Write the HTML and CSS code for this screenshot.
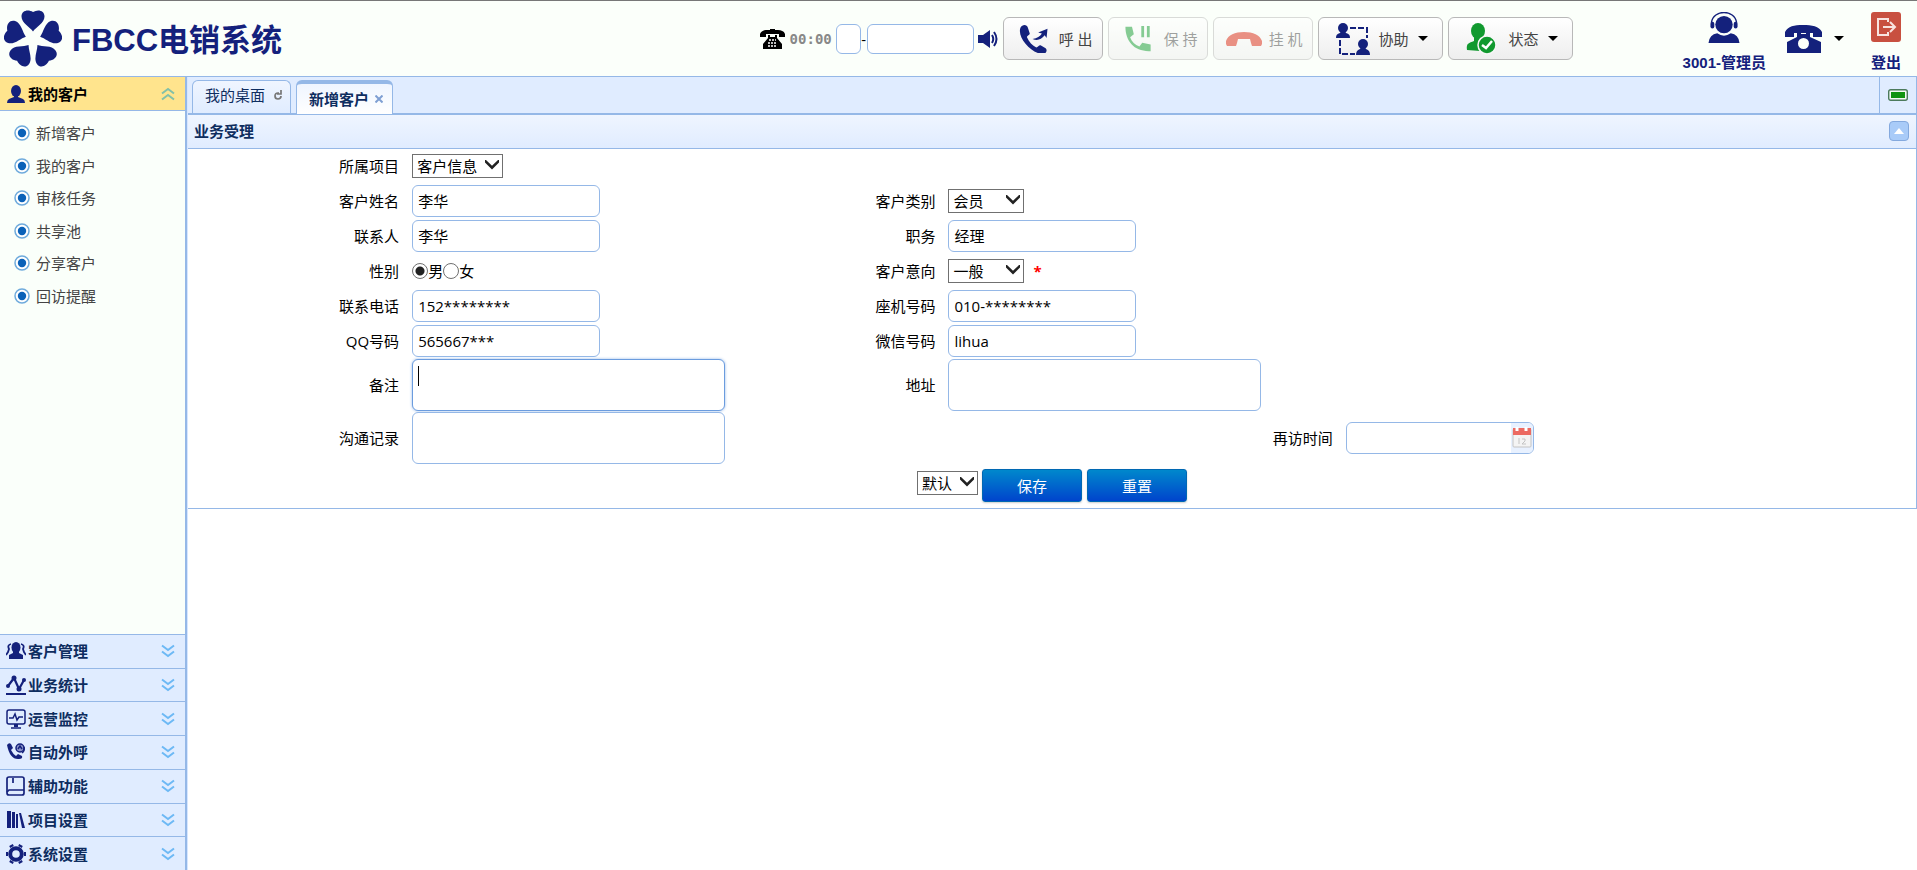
FILE: index.html
```html
<!DOCTYPE html>
<html lang="zh-CN">
<head>
<meta charset="utf-8">
<title>FBCC电销系统</title>
<link rel="stylesheet" href="styles.css">
</head>
<body>
<svg class="defs" aria-hidden="true">
  <symbol id="chev" viewBox="0 0 14 14"><path d="M1 1.500l6 4.500 6-4.500M1 7.500l6 4.500 6-4.500" fill="none" stroke="currentColor" stroke-width="2"/></symbol>
  <symbol id="arrow" viewBox="0 0 14 10"><path d="M0 1.200V0l1 0 6 5.800L13 0h1v2.500L7 9.500 0 2.500z" fill="#222"/></symbol>
  <symbol id="dot" viewBox="0 0 16 16"><circle cx="8" cy="8" r="7" fill="#fff" stroke="#6fabdc" stroke-width="1.500"/><circle cx="8" cy="8" r="4.200" fill="#0b62b8"/></symbol>
</svg>
<header class="topbar">
  <div class="brand">
    <svg class="logo" viewBox="-29 -29 58 58" fill="#14217c">
      <g id="leaf"><path d="M0-7.500C-3-12-11.500-16-11.500-22.500-11.500-28.500-5-30 0-27 5-30 11.500-28.500 11.500-22.500 11.500-16 3-12 0-7.500z"/></g>
      <use href="#leaf" transform="rotate(72)"/><use href="#leaf" transform="rotate(144)"/><use href="#leaf" transform="rotate(216)"/><use href="#leaf" transform="rotate(288)"/>
    </svg>
    <h1 class="title">FBCC电销系统</h1>
  </div>
  <div class="toolbar">
    <svg class="i-tel" viewBox="0 0 25 20"><path d="M0 8V5c1-3 4-4 7-4h3V0h5v1h3c3 0 6 1 7 4v3h-6V5H6v3z"/><path d="M8 6h2v2h5V6h2v3l5 6v5H3v-5l5-6z"/><path d="M9 11h7M8 14h9M8 17h9" stroke="#fff" stroke-width="1.500" stroke-dasharray="2 1"/></svg>
    <span class="timer">00:00</span>
    <input class="box prefix" type="text" aria-label="前缀"><span class="dash">-</span><input class="box number" type="text" aria-label="电话号码">
    <svg class="i-vol" viewBox="0 0 20 20" fill="#14217c"><path d="M0 6h5l7-5v18l-7-5H0z"/><path d="M14 6q2.500 4 0 8M16 3q5 7 0 14" fill="none" stroke="#14217c" stroke-width="2"/></svg>
    <button class="tool" type="button"><svg class="i-30" viewBox="0 0 30 30"><path d="M1 3C3-1 8-1 9 3l2 6c0 2-3 2-3 4 2 5 6 9 10 11 2 0 3-3 5-2l5 3c2 2 1 5-2 6C14 32-3 14 1 3z" fill="#14217c"/><path d="M14 15c5-1 8-3 10-6l-4-1 10-4-1 10-2-3c-4 5-8 6-13 4z" fill="#14217c"/></svg><span>呼 出</span></button>
    <button class="tool" type="button" disabled><svg class="i-30" viewBox="0 0 30 30" fill="#11992f"><path d="M1 2h7l2 8-4 3c2 5 5 8 10 10l3-4 9 2v7C11 29 1 18 1 2z"/><path d="M18 1h3v12h-3zM24 1h3v12h-3z"/></svg><span>保 持</span></button>
    <button class="tool" type="button" disabled><svg class="i-hang" viewBox="0 0 36 14" fill="#d9230f"><path d="M0 9C2 3 9 0 18 0s16 3 18 9v3l-1 2h-9l-1-3-1-4H12l-1 4-1 3H1l-1-2z"/></svg><span>挂 机</span></button>
    <button class="tool menu" type="button"><svg class="i-help" viewBox="0 0 34 32" fill="#14217c"><circle cx="7" cy="5" r="5"/><path d="M5 8h4l1 2c3 1 4 2 4 5H0c0-3 1-4 4-5z"/><circle cx="27" cy="21" r="5"/><path d="M25 24h4l1 2c3 1 4 3 4 6H20c0-3 1-5 4-6z"/><path d="M14 5h17v10M4 17v14h15" fill="none" stroke="#14217c" stroke-width="2" stroke-dasharray="6 2"/></svg><span>协助</span><i class="tri"></i></button>
    <button class="tool menu" type="button"><svg class="i-help" viewBox="0 0 34 32"><ellipse cx="12" cy="8" rx="7" ry="8" fill="#11992f"/><path d="M8 13h8l1 5-3 10-13-1c-1-7 2-7 7-9z" fill="#11992f"/><circle cx="21" cy="22" r="9" fill="#11992f" stroke="#f6f6f6" stroke-width="1.500"/><path d="M16 22l4 3 6-7" fill="none" stroke="#fff" stroke-width="2.500"/></svg><span>状态</span><i class="tri"></i></button>
  </div>
  <div class="account">
    <a class="entry" href="#"><svg class="i-32" viewBox="0 0 32 32" fill="#14217c"><circle cx="16" cy="13" r="9"/><path d="M3 11C5-3 27-3 29 11" fill="none" stroke="#14217c" stroke-width="1.500"/><rect x="2" y="10" width="4" height="7" rx="2"/><rect x="26" y="10" width="4" height="7" rx="2"/><path d="M0 32q1-9 9-10 7 5 14 0 8 1 9 10z"/></svg><span>3001-管理员</span></a>
    <button class="phone" type="button" aria-label="话机"><svg class="i-phone" viewBox="0 0 37 28"><path d="M0 12V7C3 1 9 0 18 0s16 1 19 7v5h-9V8H9v4z" fill="#14217c"/><path d="M12 6h4v3h5V6h4v6l11 5v11H2V17l10-5z" fill="#14217c"/><circle cx="18.500" cy="18.500" r="5.500" fill="#fbfffa"/></svg><i class="tri"></i></button>
    <a class="entry" href="#"><svg class="i-exit" viewBox="0 0 30 30"><rect width="30" height="30" rx="3" fill="#c85040"/><path d="M17 10V7H7v16h10v-3M12 15h12M19 10l5 5-5 5" fill="none" stroke="#f8e4e0" stroke-width="2"/></svg><span>登出</span></a>
  </div>
</header>
<div class="shell">
  <nav class="side">
    <button class="head active" type="button"><svg class="i-20" viewBox="0 0 20 20"><ellipse cx="10" cy="7" rx="5" ry="6" fill="#14217c"/><path d="M8 11h4v2l5 2q2 1 2 4H1q0-3 2-4l5-2z" fill="#14217c"/></svg><span>我的客户</span><svg class="chev up"><use href="#chev"/></svg></button>
    <ul class="links">
      <li><svg class="dot"><use href="#dot"/></svg><a href="#">新增客户</a></li>
      <li><svg class="dot"><use href="#dot"/></svg><a href="#">我的客户</a></li>
      <li><svg class="dot"><use href="#dot"/></svg><a href="#">审核任务</a></li>
      <li><svg class="dot"><use href="#dot"/></svg><a href="#">共享池</a></li>
      <li><svg class="dot"><use href="#dot"/></svg><a href="#">分享客户</a></li>
      <li><svg class="dot"><use href="#dot"/></svg><a href="#">回访提醒</a></li>
    </ul>
    <div class="groups">
      <button class="head" type="button"><svg class="i-20" viewBox="0 0 20 20" fill="#14217c"><ellipse cx="10" cy="6.500" rx="4.500" ry="5.500"/><path d="M7 10h6v2l4 2v4H3v-4l4-2z"/><path d="M5 3Q1 4 3 8l-1 3-2 3M15 3q4 1 2 5l1 3 2 3" fill="none" stroke="#14217c" stroke-width="1.800"/></svg><span>客户管理</span><svg class="chev"><use href="#chev"/></svg></button>
      <button class="head" type="button"><svg class="i-20" viewBox="0 0 20 20"><path d="M2 11l6-8 5 11 5-9M0 19h20" fill="none" stroke="#14217c" stroke-width="2.200"/><g fill="#14217c"><circle cx="2" cy="11" r="2"/><circle cx="8" cy="3" r="2.500"/><circle cx="13" cy="14" r="2.500"/><circle cx="18" cy="5" r="2"/></g></svg><span>业务统计</span><svg class="chev"><use href="#chev"/></svg></button>
      <button class="head" type="button"><svg class="i-20" viewBox="0 0 20 20" fill="none" stroke="#14217c" stroke-width="1.500"><rect x="1" y="1" width="18" height="14" rx="2"/><path d="M3 9h4l2-4 2 6 2-3h4M5 19h10"/><path d="M10 15v3" stroke-width="4"/></svg><span>运营监控</span><svg class="chev"><use href="#chev"/></svg></button>
      <button class="head" type="button"><svg class="i-20" viewBox="0 0 20 20"><path d="M1 3q2-3 4-1l2 4-2 2q2 4 5 6l2-2 4 2q1 3-3 3Q4 18 1 3z" fill="#14217c"/><circle cx="14" cy="6" r="4" fill="#8a93c8" stroke="#14217c" stroke-width="1.500"/><path d="M12 7l2-3 2 3M18 5q1 4-2 6" fill="none" stroke="#14217c" stroke-width="1.500"/></svg><span>自动外呼</span><svg class="chev"><use href="#chev"/></svg></button>
      <button class="head" type="button"><svg class="i-20" viewBox="0 0 20 20" fill="none" stroke="#14217c" stroke-width="1.700"><rect x="1" y="1" width="17" height="18" rx="2"/><path d="M1 16l2-2h15M7 2v5"/></svg><span>辅助功能</span><svg class="chev"><use href="#chev"/></svg></button>
      <button class="head" type="button"><svg class="i-20" viewBox="0 0 20 20" fill="#14217c"><path d="M1 1h4v17H1zM6 2h3v16H6zM10 4h2v14h-2zM13 3l2 0 4 15h-3z"/></svg><span>项目设置</span><svg class="chev"><use href="#chev"/></svg></button>
      <button class="head" type="button"><svg class="i-20" viewBox="0 0 20 20" fill="none" stroke="#14217c"><circle cx="10" cy="10" r="5.800" stroke-width="4"/><path d="M6 3L5 1M14 3l1-2M18 10h2M14 17l1 2M6 17l-1 2M2 10H0" stroke-width="4"/></svg><span>系统设置</span><svg class="chev"><use href="#chev"/></svg></button>
    </div>
  </nav>
  <main class="main">
    <div class="tabs">
      <button class="tab" type="button">我的桌面<svg class="i-re" viewBox="0 0 8 10"><path d="M5 3H4Q1 3 1 6t3 3q3 0 3-3M7 0v4H3" fill="none" stroke="#777" stroke-width="1.700"/></svg></button>
      <button class="tab on" type="button">新增客户<svg class="i-x" viewBox="0 0 8 8"><path d="M0.500 0.500l7 7M7.500 0.500l-7 7" stroke="#7f9fd3" stroke-width="2"/></svg></button>
      <button class="led" type="button" aria-label="连接状态"><svg class="i-led" viewBox="0 0 20 12"><rect x="0.700" y="0.700" width="18.600" height="10.600" rx="2" fill="#f4faf4" stroke="#4c7a5c" stroke-width="1.400"/><rect x="3" y="3" width="14" height="6" fill="#119411"/></svg></button>
    </div>
    <section class="panel">
      <div class="panel-head"><h2 class="panel-title">业务受理</h2><button class="fold" type="button" aria-label="收起"><svg class="i-fold" viewBox="0 0 10 6"><path d="M5 0l5 6H0z" fill="#fff"/></svg></button></div>
      <form class="form">
        <div class="row first"><label for="proj">所属项目</label><div class="field"><span class="pick"><select id="proj" class="w-l"><option>客户信息</option></select><svg><use href="#arrow"/></svg></span></div></div>
        <div class="row"><label for="name">客户姓名</label><div class="field"><input class="box text" id="name" type="text" value="李华"></div><label for="kind">客户类别</label><div class="field"><span class="pick"><select id="kind" class="w-m"><option>会员</option></select><svg><use href="#arrow"/></svg></span></div></div>
        <div class="row"><label for="contact">联系人</label><div class="field"><input class="box text" id="contact" type="text" value="李华"></div><label for="job">职务</label><div class="field"><input class="box text" id="job" type="text" value="经理"></div></div>
        <div class="row"><span class="cap">性别</span><div class="field"><input class="radio" type="radio" name="sex" id="male" checked><label for="male">男</label><input class="radio" type="radio" name="sex" id="female"><label for="female">女</label></div><label for="will">客户意向</label><div class="field"><span class="pick"><select id="will" class="w-m"><option>一般</option></select><svg><use href="#arrow"/></svg></span><b class="star">*</b></div></div>
        <div class="row"><label for="tel">联系电话</label><div class="field"><input class="box text" id="tel" type="text" value="152********"></div><label for="land">座机号码</label><div class="field"><input class="box text" id="land" type="text" value="010-********"></div></div>
        <div class="row"><label for="qq">QQ号码</label><div class="field"><input class="box text" id="qq" type="text" value="565667***"></div><label for="wx">微信号码</label><div class="field"><input class="box text" id="wx" type="text" value="lihua"></div></div>
        <div class="row tall"><label for="memo">备注</label><div class="field"><span class="area"><textarea class="box focus" id="memo"></textarea><i class="caret"></i></span></div><label for="addr">地址</label><div class="field"><span class="area"><textarea class="box" id="addr"></textarea></span></div></div>
        <div class="row tall late"><label for="log">沟通记录</label><div class="field"><span class="area"><textarea class="box" id="log"></textarea></span></div><label for="next">再访时间</label><div class="field"><span class="date"><input id="next" type="text"><svg class="i-cal" viewBox="0 0 22 30"><rect width="22" height="30" fill="#e8f1ff"/><rect x="2" y="6" width="18" height="18" rx="1" fill="#f4f4f4" stroke="#c4c4c4"/><path d="M2 5h18v7H2z" fill="#ec6a62"/><path d="M6 4v4M15 4v4" stroke="#fff" stroke-width="3"/><path d="M8 15v6M11 16h3v2l-3 3h4" stroke="#c4c4c4" fill="none"/></svg></span></div></div>
        <div class="actions"><span class="pick"><select class="w-s" aria-label="方案"><option>默认</option></select><svg><use href="#arrow"/></svg></span><button class="go" type="button">保存</button><button class="go" type="button">重置</button></div>
      </form>
    </section>
  </main>
</div>
</body>
</html>
```
FILE: styles.css
```css
* { box-sizing: border-box; }
html, body { height: 100%; }
body {
  margin: 0;
  display: flex;
  flex-direction: column;
  background: #fff;
  color: #000;
  font: 15px/20px "Open Sans", "Noto Sans CJK SC", sans-serif;
}
button, input, select, textarea { font: inherit; color: inherit; margin: 0; }
button { background: none; border: 0; padding: 0; }
svg { display: block; flex: none; }
a { color: inherit; text-decoration: none; }
.defs { position: absolute; width: 0; height: 0; }

/* top bar */
.topbar {
  flex: none;
  height: 77px;
  display: flex;
  align-items: stretch;
  padding: 0 16px 0 4px;
  background: #fbfffa;
  border-top: 1px solid #777;
  border-bottom: 1px solid #95b8e7;
}
.brand { display: flex; align-items: center; gap: 10px; }
.logo { width: 58px; height: 58px; }
.title {
  margin: 0;
  padding-top: 4px;
  font: bold 31px/40px "Liberation Sans", "Noto Sans CJK SC", sans-serif;
  color: #14217c;
}
.toolbar { display: flex; align-items: center; margin-left: auto; }
.i-tel { width: 25px; height: 20px; margin-right: 5px; }
.timer { width: 46px; color: #888; font: bold 14px/20px "DejaVu Sans Mono", "Liberation Mono", monospace; }
.box { border: 1px solid #95b8e7; border-radius: 6px; background: #fff; outline: 0; }
.prefix, .number { height: 30px; padding: 0 4px; }
.prefix { width: 25px; }
.number { width: 107px; }
.dash { width: 6px; text-align: center; }
.i-vol { width: 20px; height: 20px; margin: 0 5px 0 4px; }
.tool {
  width: 100px;
  height: 43px;
  display: flex;
  align-items: center;
  justify-content: space-between;
  padding: 0 9px 0 15px;
  border: 1px solid #b8b8b8;
  border-radius: 6px;
  background: linear-gradient(#fff, #eee);
  color: #444;
}
.tool + .tool { margin-left: 5px; }
.tool:disabled { opacity: .5; }
.tool.menu { width: 125px; padding: 0 14px 0 17px; }
.i-30 { width: 29px; height: 28px; }
.i-hang { width: 36px; height: 14px; margin-left: -3px; }
.i-help { width: 34px; height: 32px; }
.tri { width: 0; height: 0; border: 5px solid transparent; border-top-color: #000; border-bottom: 0; }
.account { display: flex; margin-left: 110px; color: #14217c; font-weight: bold; font-family: "Liberation Sans", "Noto Sans CJK SC", sans-serif; }
.entry { display: flex; flex-direction: column; align-items: center; justify-content: space-between; padding: 11px 0 3px; }
.i-32 { width: 32px; height: 31px; }
.i-exit { width: 30px; height: 30px; }
.phone { display: flex; align-items: center; gap: 12px; margin: 0 27px 0 19px; }
.i-phone { width: 37px; height: 28px; }

/* frame */
.shell { flex: 1; min-height: 0; display: flex; }
.side { flex: none; width: 187px; display: flex; flex-direction: column; background: #fafffa; border-right: 2px solid #95b8e7; }
.head {
  display: flex;
  align-items: center;
  width: 100%;
  padding: 0 10px 0 6px;
  background: #e0ecff;
  color: #0e2d5f;
  font-weight: bold;
  border-top: 1px solid #95b8e7;
}
.head.active { height: 34px; background: #ffe48d; color: #000; border-top: 0; border-bottom: 1px solid #95b8e7; }
.i-20 { width: 20px; height: 20px; margin-right: 2px; }
.chev { width: 14px; height: 14px; margin-left: auto; color: #6db9f5; }
.chev.up { transform: rotate(180deg); color: #83c0a8; }
.links { list-style: none; margin: 0; padding: 6px 0 0 14px; height: 201px; display: grid; grid-auto-rows: 1fr; color: #444; }
.links li { display: flex; align-items: center; gap: 6px; }
.dot { width: 16px; height: 16px; }
.groups { margin-top: auto; height: 236px; display: grid; grid-auto-rows: 1fr; }

.main { flex: 1; min-width: 0; border-left: 1px solid #d6e6ff; }
.tabs { height: 38px; display: flex; align-items: flex-end; padding-left: 4px; background: #e0ecff; border-bottom: 2px solid #95b8e7; color: #0e2d5f; }
.tab {
  display: flex;
  align-items: center;
  justify-content: space-between;
  width: 99px;
  height: 33px;
  padding: 0 8px 4px 12px;
  border: 1px solid #95b8e7;
  border-bottom: 0;
  border-radius: 6px 6px 0 0;
  background: linear-gradient(#eff5ff, #e0ecff);
}
.tab.on { width: 97px; margin: 0 0 -1px 5px; height: 34px; padding: 0 9px 0 12px; border-top: 4px solid #95b8e7; background: linear-gradient(#eff5ff, #fff); font-weight: bold; }
.i-re { width: 8px; height: 10px; }
.i-x { width: 8px; height: 8px; }
.led { width: 38px; height: 36px; margin-left: auto; display: grid; place-items: center; border-left: 1px solid #95b8e7; border-right: 1px solid #95b8e7; }
.i-led { width: 20px; height: 12px; }

/* panel */
.panel { border: solid #95b8e7; border-width: 0 1px 1px 0; }
.panel-head { height: 34px; display: flex; align-items: center; justify-content: space-between; padding: 0 7px 2px 6px; background: linear-gradient(#eff5ff, #e0ecff); border-bottom: 1px solid #95b8e7; }
.panel-title { margin: 0; font-size: 15px; line-height: 20px; color: #0e2d5f; }
.fold { width: 20px; height: 20px; display: grid; place-items: center; border: 1px solid #84a9de; border-radius: 4px; background: #a9cbf8; }
.i-fold { width: 10px; height: 6px; }
.form { padding-bottom: 6px; }
.row { height: 35px; display: grid; grid-template-columns: 211fr 423fr 87fr 967fr; column-gap: 13px; align-items: center; }
.row > label, .cap { text-align: right; white-space: nowrap; }
.row.first { height: 34px; }
.row.tall { height: 53px; padding-top: 1px; }
.row.late { grid-template-columns: 211fr 820fr 87fr 570fr; }
.field { display: flex; align-items: center; min-width: 0; }
.text { width: 188px; height: 32px; padding: 0 5px; }
.area { position: relative; display: flex; }
.area textarea { width: 313px; height: 52px; padding: 5px; resize: none; }
.area .focus { border-color: #6b9cde; box-shadow: 0 0 3px #95b8e7; }
.caret { position: absolute; left: 6px; top: 7px; width: 1px; height: 20px; background: #000; }
.pick { position: relative; display: flex; }
.pick select { appearance: none; height: 24px; padding: 0 4px; border: 1px solid #707070; border-radius: 0; background: #fff; line-height: 20px; }
.pick svg { position: absolute; right: 4px; top: 6px; width: 14px; height: 10px; pointer-events: none; }
.w-l { width: 91px; }
.w-m { width: 76px; }
.w-s { width: 61px; }
.star { margin-left: 9px; color: #f00; }
.radio { appearance: none; width: 16px; height: 16px; border: 1px solid #707070; border-radius: 50%; background: #fff; }
.radio:checked { background: radial-gradient(circle, #222 4px, #fff 5px); }
.date { width: 188px; height: 32px; display: flex; border: 1px solid #95b8e7; border-radius: 6px; overflow: hidden; background: #fff; }
.date input { flex: 1; min-width: 0; border: 0; background: none; outline: 0; padding: 0 5px; }
.i-cal { width: 22px; height: 30px; }
.actions { display: flex; justify-content: center; padding-top: 5px; }
.actions .pick { margin: 2px 4px 0 0; }
.go { width: 100px; height: 33px; border: 1px solid #0068b3; border-radius: 3px; background: linear-gradient(#0088cc, #0044cc); color: #fff; box-shadow: 0 1px 2px #ccc; }
.go + .go { margin-left: 5px; }
```
